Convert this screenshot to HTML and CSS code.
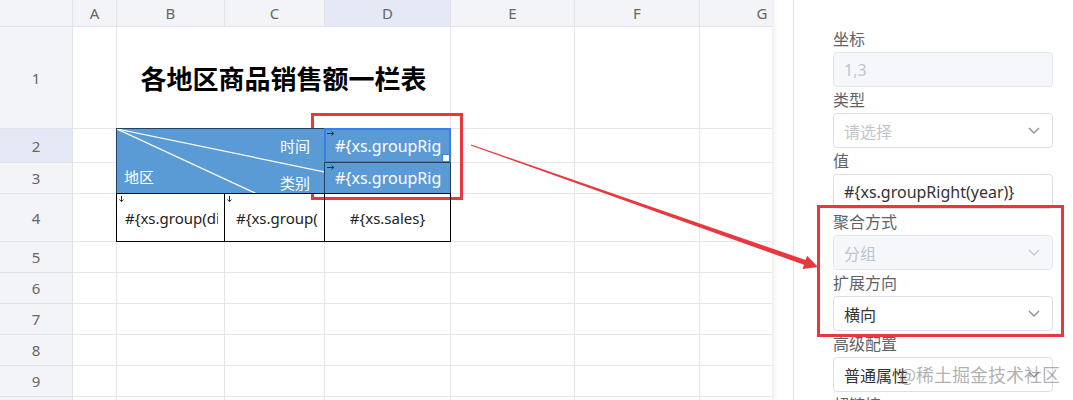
FILE: index.html
```html
<!DOCTYPE html>
<html>
  <head>
    <meta charset="utf-8" />
    <meta name="viewport" content="width=device-width, initial-scale=1" />
    <link rel="stylesheet" href="styles.css">
  </head>
  <body>
    <div class="app">
      <!-- Sheet grid -->
      <div class="sheet">
        <div class="corner"></div>
        <div class="col-head">A</div>
        <div class="col-head">B</div>
        <div class="col-head">C</div>
        <div class="col-head active">D</div>
        <div class="col-head">E</div>
        <div class="col-head">F</div>
        <div class="col-head">G</div>

        <!-- row 1 -->
        <div class="row-head">1</div>
        <div class="cell"></div>
        <div class="cell title">各地区商品销售额一栏表</div>
        <div class="cell"></div>
        <div class="cell"></div>
        <div class="cell"></div>

        <!-- row 2 -->
        <div class="row-head active">2</div>
        <div class="cell"></div>
        <div class="cell tc head diag">
          <svg class="diag-lines" width="208" height="65">
            <line x1="0" y1="0" x2="208" y2="43" />
            <line x1="0" y1="0" x2="140" y2="65" />
          </svg>
          <div class="diag-top">时间</div>
          <div class="diag-bottom">
            <span class="diag-left">地区</span>
            <span>类别</span>
          </div>
        </div>
        <div class="cell tc head selected">
          <svg class="flag" width="8" height="5"><path d="M0 2.5H6.5M4.5 0.5L6.8 2.5L4.5 4.5" /></svg>
          <span class="txt">#{xs.groupRight(year)}</span>
        </div>
        <div class="cell"></div>
        <div class="cell"></div>
        <div class="cell"></div>

        <!-- row 3 -->
        <div class="row-head">3</div>
        <div class="cell"></div>
        <div class="cell tc head">
          <svg class="flag" width="8" height="5"><path d="M0 2.5H6.5M4.5 0.5L6.8 2.5L4.5 4.5" /></svg>
          <span class="txt">#{xs.groupRight(type)}</span>
        </div>
        <div class="cell"></div>
        <div class="cell"></div>
        <div class="cell"></div>

        <!-- row 4 -->
        <div class="row-head">4</div>
        <div class="cell"></div>
        <div class="cell tc pad-b">
          <svg class="flag" width="5" height="6"><path d="M2.5 0V5.5M0.5 3.5L2.5 5.8L4.5 3.5" /></svg>
          <span class="txt">#{xs.group(district)}</span>
        </div>
        <div class="cell tc pad-c">
          <svg class="flag" width="5" height="6"><path d="M2.5 0V5.5M0.5 3.5L2.5 5.8L4.5 3.5" /></svg>
          <span class="txt">#{xs.group(product)}</span>
        </div>
        <div class="cell tc center">#{xs.sales}</div>
        <div class="cell"></div>
        <div class="cell"></div>
        <div class="cell"></div>

        <!-- empty rows -->
        <div class="row-head">5</div>
        <div class="cell"></div><div class="cell"></div><div class="cell"></div><div class="cell"></div>
        <div class="cell"></div><div class="cell"></div><div class="cell"></div>
        <div class="row-head">6</div>
        <div class="cell"></div><div class="cell"></div><div class="cell"></div><div class="cell"></div>
        <div class="cell"></div><div class="cell"></div><div class="cell"></div>
        <div class="row-head">7</div>
        <div class="cell"></div><div class="cell"></div><div class="cell"></div><div class="cell"></div>
        <div class="cell"></div><div class="cell"></div><div class="cell"></div>
        <div class="row-head">8</div>
        <div class="cell"></div><div class="cell"></div><div class="cell"></div><div class="cell"></div>
        <div class="cell"></div><div class="cell"></div><div class="cell"></div>
        <div class="row-head">9</div>
        <div class="cell"></div><div class="cell"></div><div class="cell"></div><div class="cell"></div>
        <div class="cell"></div><div class="cell"></div><div class="cell"></div>
        <div class="row-head">10</div>
        <div class="cell"></div><div class="cell"></div><div class="cell"></div><div class="cell"></div>
        <div class="cell"></div><div class="cell"></div><div class="cell"></div>
      </div>

      <div class="gutter"></div>

      <!-- Cell properties -->
      <aside class="panel">
        <div class="field">
          <label>坐标</label>
          <div class="input disabled">1,3</div>
        </div>
        <div class="field">
          <label>类型</label>
          <div class="input">
            <span class="placeholder">请选择</span>
            <svg class="chev" width="12" height="7"><path d="M1 1L6 6L11 1" /></svg>
          </div>
        </div>
        <div class="field">
          <label>值</label>
          <div class="input">#{xs.groupRight(year)}</div>
        </div>
        <div class="field">
          <label>聚合方式</label>
          <div class="input disabled">
            <span>分组</span>
            <svg class="chev" width="12" height="7"><path d="M1 1L6 6L11 1" /></svg>
          </div>
        </div>
        <div class="field">
          <label>扩展方向</label>
          <div class="input">
            <span>横向</span>
            <svg class="chev" width="12" height="7"><path d="M1 1L6 6L11 1" /></svg>
          </div>
        </div>
        <div class="field">
          <label>高级配置</label>
          <div class="input">
            <span>普通属性</span>
            <svg class="chev" width="12" height="7"><path d="M1 1L6 6L11 1" /></svg>
          </div>
        </div>
        <div class="field">
          <label>超链接</label>
          <div class="input"></div>
        </div>
      </aside>

      <!-- Annotations -->
      <div class="mark-box mark-cells"></div>
      <div class="mark-box mark-fields"></div>
      <svg class="arrow" width="1073" height="400">
        <polygon points="471.2,144.5 805.6,260.0 807.1,255.8 818,267 802.5,269.0 804.0,264.8 470.8,145.5" />
      </svg>
      <div class="watermark">@稀土掘金技术社区</div>
    </div>
  </body>
</html>
```

FILE: styles.css
```css
* {
  box-sizing: border-box;
}

body {
  margin: 0;
  font-family: "Noto Sans", "Noto Sans CJK SC", sans-serif;
  background: #fff;
}

.app {
  position: relative;
  display: flex;
  width: 1073px;
  height: 400px;
  overflow: hidden;
}

/* Sheet */
.sheet {
  flex: none;
  width: 772px;
  height: 400px;
  overflow: hidden;
  display: grid;
  grid-template-columns: 73px 44px 108px 100px 126px 124px 125px 125px;
  grid-template-rows: 27px 102px 34px 31px 48px repeat(6, 31px);
}

.cell {
  border-right: 1px solid #e6e6e6;
  border-bottom: 1px solid #e6e6e6;
}

.corner,
.col-head,
.row-head {
  display: flex;
  align-items: center;
  justify-content: center;
  background: #f3f4f7;
  border-right: 1px solid #e1e3e8;
  border-bottom: 1px solid #e1e3e8;
  color: #666;
  font-size: 15px;
}

.col-head.active,
.row-head.active {
  background: #e4e9f5;
}

.title {
  grid-column: span 3;
  display: flex;
  align-items: center;
  justify-content: center;
  font-family: "Noto Sans CJK SC", sans-serif;
  font-size: 26px;
  font-weight: bold;
  color: #000;
}

/* Report table cells */
.tc {
  position: relative;
  z-index: 1;
  margin: -1px 0 0 -1px;
  border: 1px solid #000;
  display: flex;
  align-items: center;
  overflow: hidden;
  white-space: nowrap;
  font-size: 15px;
  color: #222;
}

.txt {
  flex: 1 1 auto;
  min-width: 0;
  overflow: hidden;
  white-space: nowrap;
}

.pad-b {
  padding: 0 6px 0 8px;
}

.pad-c {
  padding: 0 6px 0 11px;
}

.center {
  justify-content: center;
}

.head {
  background: #5b9bd5;
  border-color: #22405f;
  color: #fff;
  font-size: 16px;
  padding: 0 8px 0 10px;
}

.selected {
  outline: 2px solid #3b80e3;
  outline-offset: -2px;
}

.selected::after {
  content: "";
  position: absolute;
  right: 0;
  bottom: 0;
  width: 6px;
  height: 6px;
  background: #fff;
  border: 1px solid #3b80e3;
}

.flag {
  position: absolute;
  top: 2px;
  left: 2px;
  fill: none;
  stroke: #1b2d52;
  stroke-width: 1;
}

.diag {
  grid-column: span 2;
  grid-row: span 2;
  flex-direction: column;
  align-items: stretch;
  justify-content: space-between;
  padding: 7px 14px 0 7px;
  font-family: "Noto Sans CJK SC", sans-serif;
  font-size: 15px;
  line-height: 20px;
}

.diag-lines {
  position: absolute;
  left: 0;
  top: 0;
  overflow: visible;
  stroke: #fff;
  stroke-width: 1.2;
}

.diag-top {
  position: relative;
  text-align: right;
}

.diag-bottom {
  position: relative;
  display: flex;
  align-items: flex-end;
  justify-content: space-between;
}

.diag-left {
  margin-bottom: 6px;
}

.gutter {
  flex: none;
  width: 21px;
  background: linear-gradient(to right, rgba(0, 0, 0, 0.07), rgba(0, 0, 0, 0) 5px);
}

/* Properties panel */
.panel {
  flex: 1;
  border-left: 1px solid #e6e6e6;
  padding: 26px 20px 0 39px;
  font-family: "Noto Sans", "Noto Sans CJK SC", sans-serif;
}

.field label {
  display: block;
  height: 26px;
  line-height: 26px;
  font-size: 16px;
  color: #606266;
}

.input {
  height: 35px;
  display: flex;
  align-items: center;
  justify-content: space-between;
  padding: 0 12px 0 10px;
  border: 1px solid #dcdfe6;
  border-radius: 4px;
  font-size: 16px;
  color: #333;
}

.input.disabled {
  background: #f5f7fa;
  border-color: #e4e7ed;
  color: #c0c4cc;
}

.placeholder {
  color: #c0c4cc;
}

.chev {
  fill: none;
  stroke: #8d9096;
  stroke-width: 1.4;
}

.disabled .chev {
  stroke: #c8cbd1;
}

/* Annotations */
.mark-box {
  position: absolute;
  border: 3px solid #e8383d;
}

.mark-cells {
  left: 311px;
  top: 113px;
  width: 152px;
  height: 87px;
}

.mark-fields {
  left: 817px;
  top: 205px;
  width: 247px;
  height: 132px;
}

.arrow {
  position: absolute;
  left: 0;
  top: 0;
  fill: #e8383d;
}

.watermark {
  position: absolute;
  left: 899px;
  top: 361px;
  font-family: "Noto Sans CJK SC", sans-serif;
  font-size: 18px;
  color: rgba(110, 110, 110, 0.55);
}
```
